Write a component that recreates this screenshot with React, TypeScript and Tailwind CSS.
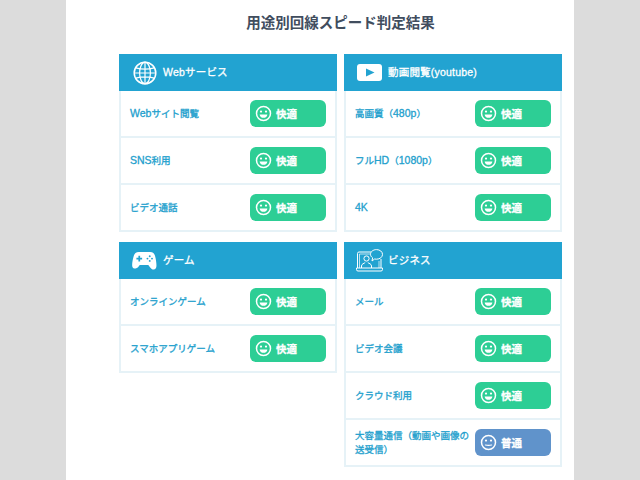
const Smile = ({ flat }: { flat?: boolean }) => (
  <svg width="17" height="17" viewBox="0 0 17 17" fill="none" className="shrink-0">
    <circle cx="8.5" cy="8.5" r="7" stroke="#fff" strokeWidth="1.5" />
    <circle cx="6" cy="6.6" r="1.1" fill="#fff" />
    <circle cx="11" cy="6.6" r="1.1" fill="#fff" />
    {flat ? (
      <path d="M5.4 11q3.100 .8 6.200 0" stroke="#fff" strokeWidth="1.2" strokeLinecap="round" />
    ) : (
      <path d="M4.600 9.400h7.800q-.6 3.400 -3.900 3.400t-3.900 -3.400z" fill="#fff" />
    )}
  </svg>
);

const Globe = () => (
  <svg width="24" height="24" viewBox="0 0 24 24" fill="none" stroke="#fff" strokeWidth="1.2" className="ml-[1px]">
    <circle cx="12" cy="12" r="10.8" strokeWidth="1.5" />
    <ellipse cx="12" cy="12" rx="5.4" ry="10.8" />
    <path d="M12 1v22M1.200 12h21.600M2.800 6.800q9.200 2.600 18.400 0M2.800 17.200q9.200 -2.600 18.400 0" />
  </svg>
);

const Play = () => (
  <svg width="25" height="17" viewBox="0 0 25 17">
    <rect width="25" height="17" rx="3" fill="#fff" />
    <path d="M9 4.500v8l8.500 -4z" fill="#22a3d1" />
  </svg>
);

const Pad = () => (
  <svg width="25" height="19" viewBox="0 0 26 20">
    <path d="M7 1h12c3 0 4.400 1.600 5.200 4.600.9 3.400 1.400 7 1.400 10 0 2.400-1.200 3.900-3 3.900-1.600 0-2.600-.9-3.600-2.200l-2-2.600H8l-2 2.600C5 17.600 4 18.500 2.400 18.500.8 18.500 0 17 0 15c0-3 .7-6.200 1.600-9.400C2.400 2.600 4 1 7 1z" fill="#fff" />
    <path d="M7.500 5v6M4.500 8h6" stroke="#22a3d1" strokeWidth="1.8" />
    <circle cx="18.500" cy="5.600" r="1" fill="#22a3d1" />
    <circle cx="18.500" cy="10.400" r="1" fill="#22a3d1" />
    <circle cx="16.100" cy="8" r="1" fill="#22a3d1" />
    <circle cx="20.900" cy="8" r="1" fill="#22a3d1" />
  </svg>
);

const Biz = () => (
  <svg width="27" height="23" viewBox="0 0 27 23" fill="none" stroke="#fff" strokeWidth="1" className="-ml-[1px]">
    <path d="M1.500 19V4.500a1.500 1.500 0 0 1 1.500-1.500h14M25 10v9" />
    <path d="M3.500 19V5h15M23 12v7" strokeWidth="0.7" />
    <path d="M.5 19h26v1.500a1.500 1.500 0 0 1-1.500 1.500H2a1.500 1.500 0 0 1-1.500-1.500z" />
    <circle cx="10.500" cy="9.500" r="2.600" />
    <path d="M5.500 19v-2c0-2.200 2.600-2.400 3.700-3.500M15.500 19v-2c0-2.200-2.600-2.400-3.700-3.500" />
    <path d="M20.500 .6c3.400 0 6 2.100 6 4.800s-2.600 4.800-6 4.800c-.7 0-1.300-.1-1.900-.2l-2.600 2 .6-3.200c-1.300-.9-2.100-2.100-2.100-3.400 0-2.700 2.600-4.800 6-4.800z" fill="#22a3d1" />
  </svg>
);

type Row = { label: React.ReactNode; status?: "good" | "normal" };

const L = ({ children }: { children: React.ReactNode }) => (
  <span className="text-[10.500px]">{children}</span>
);

const Badge = ({ status = "good" }: { status?: "good" | "normal" }) => (
  <div
    className={`w-[76px] h-[27px] rounded-[6px] flex items-center pl-[4.500px] gap-[4.500px] text-white text-[10.500px] font-bold shrink-0 ${
      status === "good" ? "bg-[#2dce95]" : "bg-[#6093cb]"
    }`}
  >
    <Smile flat={status === "normal"} />
    <span>{status === "good" ? "快適" : "普通"}</span>
  </div>
);

const Card = ({
  icon,
  title,
  rows,
}: {
  icon: React.ReactNode;
  title: string;
  rows: Row[];
}) => (
  <section className="w-[218px]">
    <header className="h-[37px] bg-[#22a3d1] flex items-center pl-[13px] text-white text-[10.500px] [-webkit-text-stroke:0.3px]">
      <div className="flex items-center w-[31px] [-webkit-text-stroke:0]">{icon}</div>
      <span className="tracking-[0.2px]">{title}</span>
    </header>
    <div className="border-x-2 border-[#e6f2f7]">
      {rows.map((r, i) => (
        <div
          key={i}
          className="h-[47px] border-b-2 border-[#e6f2f7] flex items-center justify-between pl-[9px] pr-[9px] text-[#22a0cd] text-[9.500px] leading-[14px] [-webkit-text-stroke:0.3px]"
        >
          <div className="w-[116px]">{r.label}</div>
          <Badge status={r.status} />
        </div>
      ))}
    </div>
  </section>
);

export default function App() {
  return (
    <div
      className="w-[640px] h-[480px] overflow-hidden bg-[#dcdcdc] flex justify-center"
      style={{ fontFamily: '"Liberation Sans", "Noto Sans CJK JP", sans-serif' }}
    >
      <main className="w-[508px] h-full bg-white pl-[53px]">
        <div className="w-[443px] flex flex-col items-center">
          <h1 className="mt-[13px] h-[41px] text-[14.500px] leading-[21px] font-bold text-[#414d5e]">
            用途別回線スピード判定結果
          </h1>
          <div className="flex gap-[7px] items-start">
            <div className="flex flex-col gap-[10px]">
              <Card
                icon={<Globe />}
                title="Webサービス"
                rows={[
                  { label: <><L>Web</L>サイト閲覧</> },
                  { label: <><L>SNS</L>利用</> },
                  { label: "ビデオ通話" },
                ]}
              />
              <Card
                icon={<Pad />}
                title="ゲーム"
                rows={[{ label: "オンラインゲーム" }, { label: "スマホアプリゲーム" }]}
              />
            </div>
            <div className="flex flex-col gap-[10px]">
              <Card
                icon={<Play />}
                title="動画閲覧(youtube)"
                rows={[
                  { label: <>高画質（<L>480p</L>）</> },
                  { label: <>フル<L>HD</L>（<L>1080p</L>）</> },
                  { label: <L>4K</L> },
                ]}
              />
              <Card
                icon={<Biz />}
                title="ビジネス"
                rows={[
                  { label: "メール" },
                  { label: "ビデオ会議" },
                  { label: "クラウド利用" },
                  { label: "大容量通信（動画や画像の送受信）", status: "normal" },
                ]}
              />
            </div>
          </div>
        </div>
      </main>
    </div>
  );
}
